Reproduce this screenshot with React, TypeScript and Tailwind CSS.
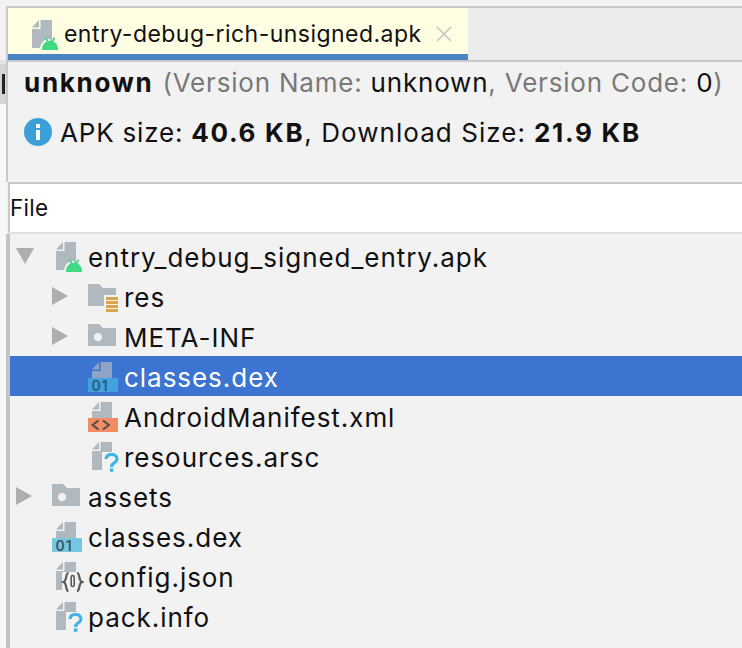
function Fold({ fill = '#afb9bf' }: { fill?: string }) {
  return <path d="M4 9.5 L11 2 V9.5 Z" fill={fill} />;
}

function PageBody({ fill = '#afb9bf' }: { fill?: string }) {
  return (
    <>
      <path d="M12.5 2 H24 V30 H4 V11 H12.5 Z" fill={fill} />
      <Fold fill={fill} />
    </>
  );
}

function ApkIcon({ bg = '#f2f2f2' }: { bg?: string }) {
  return (
    <svg width="32" height="32" viewBox="0 0 32 32" className="shrink-0">
      <PageBody />
      <path d="M14 32 C14 25 18 23 22 23 C26 23 30 25 30 32 Z" fill="#3ddc84" />
      <path d="M12 32 C12 24 17 21 22 21 L22 23 C18 23 14 25 14 32 Z" fill={bg} />
      <path d="M17.5 19.5 L19.8 24 M26.5 19.5 L24.2 24" stroke="#3ddc84" strokeWidth="1.8" />
    </svg>
  );
}

function ResFolder() {
  return (
    <svg width="32" height="32" viewBox="0 0 32 32" className="shrink-0">
      <path d="M0 4 H11 L15 8 H28 V26 H0 Z" fill="#afb9bf" />
      <rect x="16" y="15" width="16" height="17" fill="#f2f2f2" />
      <rect x="18" y="17" width="12" height="3" fill="#dca34a" />
      <rect x="18" y="21" width="12" height="3" fill="#dca34a" />
      <rect x="18" y="25" width="12" height="3" fill="#dca34a" />
      <rect x="18" y="29" width="12" height="3" fill="#dca34a" />
    </svg>
  );
}

function DotFolder() {
  return (
    <svg width="32" height="32" viewBox="0 0 32 32" className="shrink-0">
      <path d="M0 4 H11 L15 8 H28 V26 H0 Z" fill="#afb9bf" />
      <circle cx="10" cy="17" r="4" fill="#f2f2f2" />
    </svg>
  );
}

function DexIcon({ page, label, ink }: { page: string; label: string; ink: string }) {
  return (
    <svg width="32" height="32" viewBox="0 0 32 32" className="shrink-0">
      <path d="M12.5 2 H24 V18 H4 V11 H12.5 Z" fill={page} />
      <Fold fill={page} />
      <rect x="0" y="18" width="30" height="14" fill={label} />
      <text x="3.5" y="30.5" fontSize="14" fontWeight="600" letterSpacing="1" fontFamily="Inter, sans-serif" fill={ink}>
        01
      </text>
    </svg>
  );
}

function XmlIcon() {
  return (
    <svg width="32" height="32" viewBox="0 0 32 32" className="shrink-0">
      <path d="M12.5 2 H24 V18 H4 V11 H12.5 Z" fill="#afb9bf" />
      <Fold />
      <rect x="0" y="18" width="30" height="14" fill="#f28c62" />
      <path d="M10.5 20.5 L4.5 25 L10.5 29.5 M15 20.5 L21 25 L15 29.5" fill="none" stroke="#4b4b4b" strokeWidth="1.8" />
    </svg>
  );
}

function UnknownIcon() {
  return (
    <svg width="32" height="32" viewBox="0 0 32 32" className="shrink-0">
      <PageBody />
      <rect x="14" y="12" width="18" height="20" fill="#f2f2f2" />
      <path d="M18 19 C18 13 29 13 29 19 C29 23 23.5 22.5 23.5 27" fill="none" stroke="#3cb4e6" strokeWidth="3.2" />
      <rect x="21.9" y="28.4" width="3.4" height="3.4" fill="#3cb4e6" />
    </svg>
  );
}

function JsonIcon() {
  return (
    <svg width="32" height="32" viewBox="0 0 32 32" className="shrink-0">
      <PageBody />
      <rect x="10" y="12" width="21" height="20" fill="#f2f2f2" />
      <path
        d="M16.5 13 C13 13 15.5 20.5 11.5 22 C15.5 23.5 13 31 16.5 31 M25 13 C28.5 13 26 20.5 30 22 C26 23.5 28.5 31 25 31"
        fill="none"
        stroke="#5a5a5a"
        strokeWidth="2.2"
      />
      <rect x="19.2" y="15.5" width="3" height="11" rx="1.5" fill="none" stroke="#5a5a5a" strokeWidth="1.6" />
    </svg>
  );
}

function Arrow({ open }: { open?: boolean }) {
  return (
    <svg width="18" height="18" viewBox="0 0 18 18">
      {open ? <path d="M0 1 H18 L9 17 Z" fill="#aeaeae" /> : <path d="M0 0 L16 9 L0 18 Z" fill="#aeaeae" />}
    </svg>
  );
}

type Row = {
  name: string;
  depth: 0 | 1;
  icon: React.ReactNode;
  arrow?: 'open' | 'closed';
  selected?: boolean;
};

const rows: Row[] = [
  { name: 'entry_debug_signed_entry.apk', depth: 0, icon: <ApkIcon />, arrow: 'open' },
  { name: 'res', depth: 1, icon: <ResFolder />, arrow: 'closed' },
  { name: 'META-INF', depth: 1, icon: <DotFolder />, arrow: 'closed' },
  {
    name: 'classes.dex',
    depth: 1,
    selected: true,
    icon: <DexIcon page="#8ea3c6" label="#41a2dd" ink="#2b5a7f" />,
  },
  { name: 'AndroidManifest.xml', depth: 1, icon: <XmlIcon /> },
  { name: 'resources.arsc', depth: 1, icon: <UnknownIcon /> },
  { name: 'assets', depth: 0, icon: <DotFolder />, arrow: 'closed' },
  { name: 'classes.dex', depth: 0, icon: <DexIcon page="#afb9bf" label="#75c7e3" ink="#3b5563" /> },
  { name: 'config.json', depth: 0, icon: <JsonIcon /> },
  { name: 'pack.info', depth: 0, icon: <UnknownIcon /> },
];

export default function App() {
  return (
    <div className="flex h-[648px] w-[742px] overflow-hidden bg-[#f2f2f2] font-['Inter',sans-serif] text-[#111111]">
      {/* strip of the neighbouring tool window */}
      <div className="flex w-[6px] shrink-0 flex-col">
        <div className="h-[60px] bg-[#f2f2f2]" />
        <div className="h-[4px] bg-[#e4e4e4]" />
        <div className="flex h-[40px] items-start bg-[#d4d4d4] pl-[2px] pt-[10px]">
          <div className="h-[20px] w-[3px] bg-[#222222]" />
        </div>
        <div className="flex-1 bg-[#f7f7f7]" />
      </div>

      <div className="flex min-w-0 flex-1 flex-col">
        <div className="h-[6px] bg-[#f2f2f2]" />
        <div className="flex h-[56px] border-y-2 border-[#c9c9c9] border-l-2 bg-[#ececec]">
          <div className="flex h-[52px] w-[460px] items-start border-b-[6px] border-[#4a83c4] bg-[#fffee3]">
            <div className="flex h-[46px] items-center pl-[20px] pt-[6px]">
              <ApkIcon bg="#fffee3" />
              <span className="ml-[4px] text-[23px] leading-none tracking-[0.46px]">entry-debug-rich-unsigned.apk</span>
              <svg width="16" height="16" viewBox="0 0 16 16" className="ml-[14px]">
                <path d="M1 1 L15 15 M15 1 L1 15" stroke="#c4c8c4" strokeWidth="1.6" />
              </svg>
            </div>
          </div>
        </div>

        <div className="flex h-[120px] flex-col border-l-2 border-[#c9c9c9] pl-[16px]">
          <div className="mt-[6px] flex h-[30px] items-center whitespace-nowrap text-[26px] leading-none tracking-[0.8px]">
            <span className="font-bold tracking-[1.7px]">unknown</span>
            <span className="ml-[9px] text-[#787878]">(Version Name:</span>
            <span className="ml-[8px]">unknown</span>
            <span className="text-[#787878]">, Version Code:</span>
            <span className="ml-[8px]">0</span>
            <span className="text-[#787878]">)</span>
          </div>
          <div className="mt-[18px] flex h-[32px] items-center whitespace-nowrap text-[26px] leading-none tracking-[0.8px]">
            <svg width="28" height="28" viewBox="0 0 28 28" className="mr-[8px] shrink-0">
              <circle cx="14" cy="14" r="14" fill="#3d9fd8" />
              <rect x="12" y="6" width="4" height="4" fill="#ffffff" />
              <rect x="12" y="12" width="4" height="10" fill="#ffffff" />
            </svg>
            <span className="pt-[2px]">APK size:</span>
            <span className="ml-[8px] pt-[2px] font-bold tracking-[1.7px]">40.6 KB</span>
            <span className="pt-[2px] tracking-[1.05px]">, Download Size:</span>
            <span className="ml-[8px] pt-[2px] font-bold tracking-[1.7px]">21.9 KB</span>
          </div>
        </div>

        <div className="flex flex-1 flex-col">
          <div className="ml-[2px] flex h-[52px] items-center border-y-2 border-[#c9c9c9] border-b-[#e0e0e0] border-l-0 bg-white">
            <div className="flex h-[48px] w-full items-center border-l-2 border-[#c9c9c9] text-[22.5px] leading-none tracking-[0.3px]">
              File
            </div>
          </div>
          <div className="flex-1 border-l-4 border-[#c4c4c4] pt-[2px]">
            {rows.map((row, i) => (
              <div
                key={i}
                className={`flex h-[40px] items-center text-[26px] leading-none tracking-[0.96px] ${
                  row.selected ? 'bg-[#3b74d1] text-white' : ''
                } ${row.depth === 1 ? 'pl-[42px]' : 'pl-[6px]'}`}
              >
                <div className="w-[36px] shrink-0">
                  {row.arrow && <Arrow open={row.arrow === 'open'} />}
                </div>
                {row.icon}
                <span className="ml-[4px] whitespace-nowrap pt-[4px]">{row.name}</span>
              </div>
            ))}
          </div>
        </div>
      </div>
    </div>
  );
}
